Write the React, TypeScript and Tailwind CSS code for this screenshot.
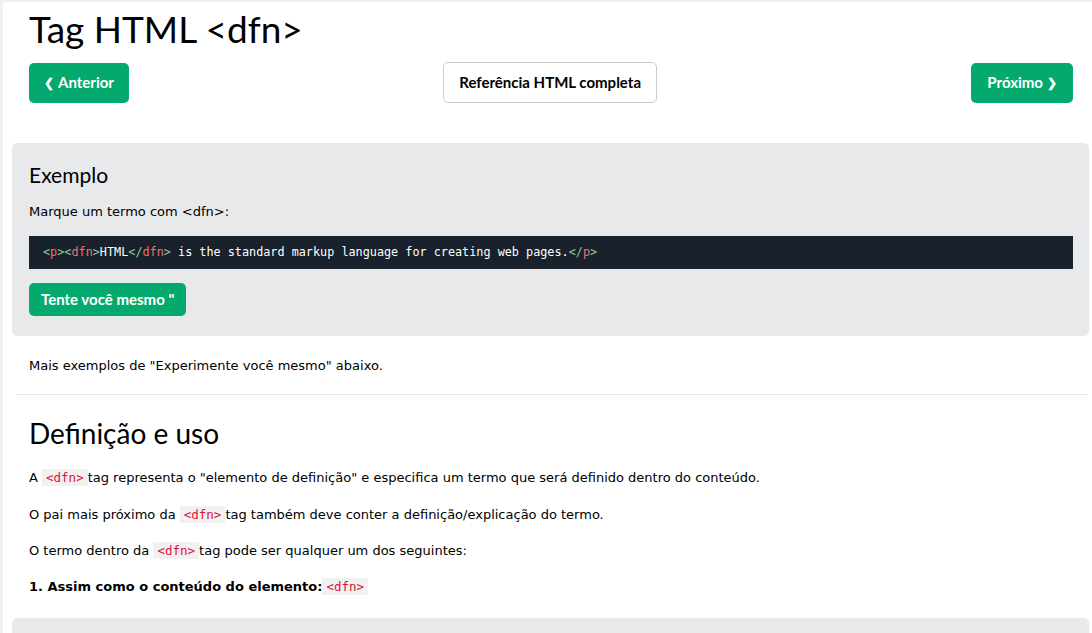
import React from "react";

const Code = ({ children }: { children: React.ReactNode }) => (
  <span className="bg-[#f1f1f1] text-[#dc143c] px-[4px] py-[1px] text-[12.5px] font-['DejaVu_Sans_Mono','Liberation_Mono',monospace]">
    {children}
  </span>
);

export default function App() {
  const B = "text-[#88c9a1]";
  const T = "text-[#f07070]";
  return (
    <div className="relative w-[1092px] h-[633px] overflow-hidden bg-white border-l-[3px] border-t-[2px] border-[#f1f1f1] font-['DejaVu_Sans',Verdana,sans-serif] text-[#000]">
      <div className="pl-[26px] pr-[19px]">
        <h1 className="text-[37px] leading-[50px] pt-[2px] pb-[-1px] font-['Lato',sans-serif] text-black">
          Tag HTML &lt;dfn&gt;
        </h1>
        <div className="flex justify-between items-center pt-[8px] font-['Lato',sans-serif]">
          <button className="h-[40px] px-[15px] bg-[#04aa6d] text-white font-bold text-[15px] rounded-[5px] flex items-center gap-[4px]">
            <span className="text-[12px]">❮</span>Anterior
          </button>
          <button className="h-[41px] px-[15px] bg-white border border-[#cccccc] text-black font-bold text-[15px] rounded-[5px]">
            Referência HTML completa
          </button>
          <button className="h-[40px] px-[16px] bg-[#04aa6d] text-white font-bold text-[15px] rounded-[5px] flex items-center gap-[4px]">
            Próximo<span className="text-[12px]">❯</span>
          </button>
        </div>
        <div className="ml-[-17px] mr-[-16px] mt-[40px] bg-[#e7e9eb] rounded-[5px] pl-[17px] pr-[16px] pt-[16px] pb-[20px]">
          <h2 className="text-[21px] leading-[32px] font-['Lato',sans-serif]">Exemplo</h2>
          <p className="text-[13px] mt-[11px] leading-[20px]">Marque um termo com &lt;dfn&gt;:</p>
          <div className="mt-[14px] h-[33px] bg-[#18212c] flex items-center pl-[14px] text-white text-[11.8px] font-['DejaVu_Sans_Mono','Liberation_Mono',monospace]">
            <span className={B}>&lt;</span><span className={T}>p</span><span className={B}>&gt;&lt;</span><span className={T}>dfn</span><span className={B}>&gt;</span>HTML<span className={B}>&lt;/</span><span className={T}>dfn</span><span className={B}>&gt;</span>&nbsp;is the standard markup language for creating web pages.<span className={B}>&lt;/</span><span className={T}>p</span><span className={B}>&gt;</span>
          </div>
          <button className="mt-[14px] h-[33px] px-[12px] bg-[#04aa6d] text-white font-bold text-[15px] rounded-[5px] font-['Lato',sans-serif]">
            Tente você mesmo "
          </button>
        </div>
        <p className="text-[13px] mt-[20px] leading-[20px]">Mais exemplos de "Experimente você mesmo" abaixo.</p>
        <hr className="ml-[-13px] mr-[-14px] mt-[18px] border-t border-[#e5e5e5]" />
        <h2 className="text-[28px] leading-[40px] mt-[18px] font-['Lato',sans-serif]">Definição e uso</h2>
        <p className="text-[13px] leading-[20px] mt-[15px]">
          A <Code>&lt;dfn&gt;</Code>tag representa o "elemento de definição" e especifica um termo que será definido dentro do conteúdo.
        </p>
        <p className="text-[13px] leading-[20px] mt-[17px]">
          O pai mais próximo da <Code>&lt;dfn&gt;</Code>tag também deve conter a definição/explicação do termo.
        </p>
        <p className="text-[13px] leading-[20px] mt-[16px]">
          O termo dentro da <Code>&lt;dfn&gt;</Code>tag pode ser qualquer um dos seguintes:
        </p>
        <p className="text-[13px] leading-[20px] mt-[16px] font-bold">
          1. Assim como o conteúdo do elemento:<Code><span className="font-normal">&lt;dfn&gt;</span></Code>
        </p>
        <div className="ml-[-17px] mr-[-16px] mt-[21px] h-[60px] bg-[#e7e9eb] rounded-[5px]" />
      </div>
    </div>
  );
}
